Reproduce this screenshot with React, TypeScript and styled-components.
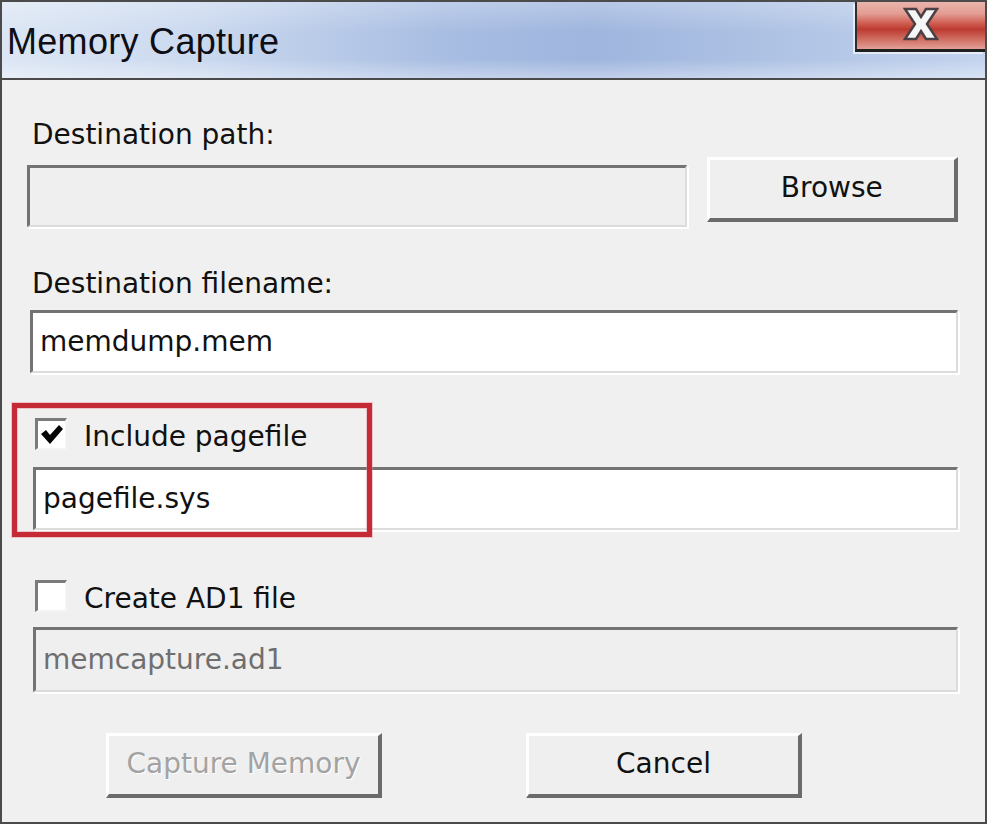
import React from "react";
import styled, { createGlobalStyle } from "styled-components";

const GlobalStyle = createGlobalStyle`
  html, body {
    margin: 0;
    padding: 0;
    background: #ffffff;
  }
  * {
    box-sizing: border-box;
  }
`;

const Window = styled.div`
  position: relative;
  width: 987px;
  height: 824px;
  border: 2px solid #4b4b4b;
  background: #f0f0f0;
  font-family: "DejaVu Sans", "Noto Sans", sans-serif;
  color: #111;
  overflow: hidden;
`;

const TitleBar = styled.div`
  display: flex;
  justify-content: space-between;
  align-items: flex-start;
  height: 78px;
  border-bottom: 2px solid #4a4a4a;
  background: linear-gradient(
      180deg,
      rgba(255, 255, 255, 0.25) 0%,
      rgba(255, 255, 255, 0) 40%,
      rgba(255, 255, 255, 0) 75%,
      rgba(255, 255, 255, 0.35) 100%
    ),
    linear-gradient(
      90deg,
      #dce6f4 0%,
      #cbd9ef 20%,
      #a8bde2 45%,
      #9fb5de 60%,
      #aec2e4 78%,
      #c3d3ee 100%
    );
`;

const Title = styled.div`
  margin: 20px 0 0 5px;
  font-family: "Liberation Sans", Arial, sans-serif;
  font-size: 36px;
  line-height: 40px;
  letter-spacing: 0.3px;
  color: #0e0e14;
`;

const CloseButton = styled.div`
  display: flex;
  justify-content: center;
  align-items: flex-start;
  width: 130px;
  height: 50px;
  padding-top: 5px;
  border-left: 2px solid #2e2e2e;
  border-bottom: 3px solid #1f1f1f;
  box-shadow: -2px 2px 0 rgba(255, 255, 255, 0.6);
  background: linear-gradient(
    180deg,
    #eab4ac 0%,
    #e39d93 25%,
    #cf5e52 45%,
    #bd3a30 58%,
    #cc6357 75%,
    #e3a097 100%
  );
`;

const Body = styled.div`
  display: flex;
  flex-direction: column;
  padding: 0 27px 0 25px;
`;

const Label = styled.div<{ $top: number }>`
  margin-top: ${(p) => p.$top}px;
  padding-left: 5px;
  font-size: 28px;
  line-height: 34px;
  height: 34px;
  white-space: nowrap;
`;

const Row = styled.div<{ $top: number }>`
  display: flex;
  align-items: flex-start;
  margin-top: ${(p) => p.$top}px;
`;

const Field = styled.div<{
  $top?: number;
  $left?: number;
  $width: number;
  $height: number;
  $disabled?: boolean;
}>`
  display: flex;
  align-items: center;
  margin-top: ${(p) => p.$top ?? 0}px;
  margin-left: ${(p) => p.$left ?? 0}px;
  width: ${(p) => p.$width}px;
  height: ${(p) => p.$height}px;
  padding: 0 0 2px 7px;
  border-style: solid;
  border-width: 3px 2px 2px 3px;
  border-color: #737373 #dcdcdc #dcdcdc #737373;
  box-shadow: 2px 2px 0 #ffffff;
  background: ${(p) => (p.$disabled ? "#efefef" : "#ffffff")};
  color: ${(p) => (p.$disabled ? "#6f6f6f" : "#111")};
  font-size: 28px;
  white-space: nowrap;
`;

const Button = styled.div<{ $width: number; $disabled?: boolean }>`
  display: flex;
  justify-content: center;
  align-items: center;
  width: ${(p) => p.$width}px;
  height: 65px;
  padding-bottom: 4px;
  border-style: solid;
  border-width: 3px 4px 4px 3px;
  border-color: #ffffff #6b6b6b #6b6b6b #ffffff;
  background: #efefef;
  font-size: 28px;
  color: ${(p) => (p.$disabled ? "#a3a3a3" : "#111")};
  text-shadow: ${(p) => (p.$disabled ? "1px 1px 0 #ffffff" : "none")};
`;

const CheckRow = styled.div<{ $top: number }>`
  display: flex;
  align-items: flex-start;
  gap: 17px;
  margin-top: ${(p) => p.$top}px;
  margin-left: 8px;
  height: 34px;
`;

const Box = styled.div`
  display: flex;
  justify-content: center;
  align-items: center;
  width: 32px;
  height: 32px;
  margin-top: 1px;
  border-style: solid;
  border-width: 3px 2px 2px 3px;
  border-color: #7b7b7b #f4f4f4 #f4f4f4 #7b7b7b;
  background: #ffffff;
`;

const CheckLabel = styled.div`
  margin-top: 3px;
  font-size: 28px;
  line-height: 34px;
  white-space: nowrap;
`;

const Highlight = styled.div`
  position: absolute;
  left: 10px;
  top: 401px;
  width: 360px;
  height: 134px;
  border: 5px solid #c52a37;
  box-shadow: 0 0 0 1px rgba(230, 140, 150, 0.45),
    inset 0 0 0 1px rgba(230, 140, 150, 0.45);
  pointer-events: none;
`;

const CloseGlyph = () => (
  <svg width="36" height="34" viewBox="0 0 36 34">
    <path
      d="M2 2 H13 L18 10 L23 2 H34 L24 17 L34 32 H23 L18 24 L13 32 H2 L12 17 Z"
      fill="#f6f6f6"
      stroke="#4a4046"
      strokeWidth="2.5"
      strokeLinejoin="miter"
    />
  </svg>
);

const CheckMark = () => (
  <svg width="24" height="22" viewBox="0 0 24 22">
    <path d="M1 10 L6 6 L10 11 L19 1 L23 5 L10 20 Z" fill="#050505" />
  </svg>
);

export default function App() {
  return (
    <>
      <GlobalStyle />
      <Window>
        <TitleBar>
          <Title>Memory Capture</Title>
          <CloseButton>
            <CloseGlyph />
          </CloseButton>
        </TitleBar>
        <Body>
          <Label $top={38}>Destination path:</Label>
          <Row $top={5}>
            <Field $top={8} $width={661} $height={62} $disabled />
            <Button $width={252} style={{ marginLeft: 20 }}>
              Browse
            </Button>
          </Row>
          <Label $top={40}>Destination filename:</Label>
          <Field $top={9} $left={3} $width={928} $height={63}>
            memdump.mem
          </Field>
          <CheckRow $top={44}>
            <Box>
              <CheckMark />
            </Box>
            <CheckLabel>Include pagefile</CheckLabel>
          </CheckRow>
          <Field $top={16} $left={6} $width={925} $height={63}>
            pagefile.sys
          </Field>
          <CheckRow $top={49}>
            <Box />
            <CheckLabel>Create AD1 file</CheckLabel>
          </CheckRow>
          <Field $top={14} $left={6} $width={925} $height={65} $disabled>
            memcapture.ad1
          </Field>
          <Row $top={41} style={{ gap: 144, marginLeft: 79 }}>
            <Button $width={276} $disabled>
              Capture Memory
            </Button>
            <Button $width={276}>Cancel</Button>
          </Row>
        </Body>
        <Highlight />
      </Window>
    </>
  );
}
